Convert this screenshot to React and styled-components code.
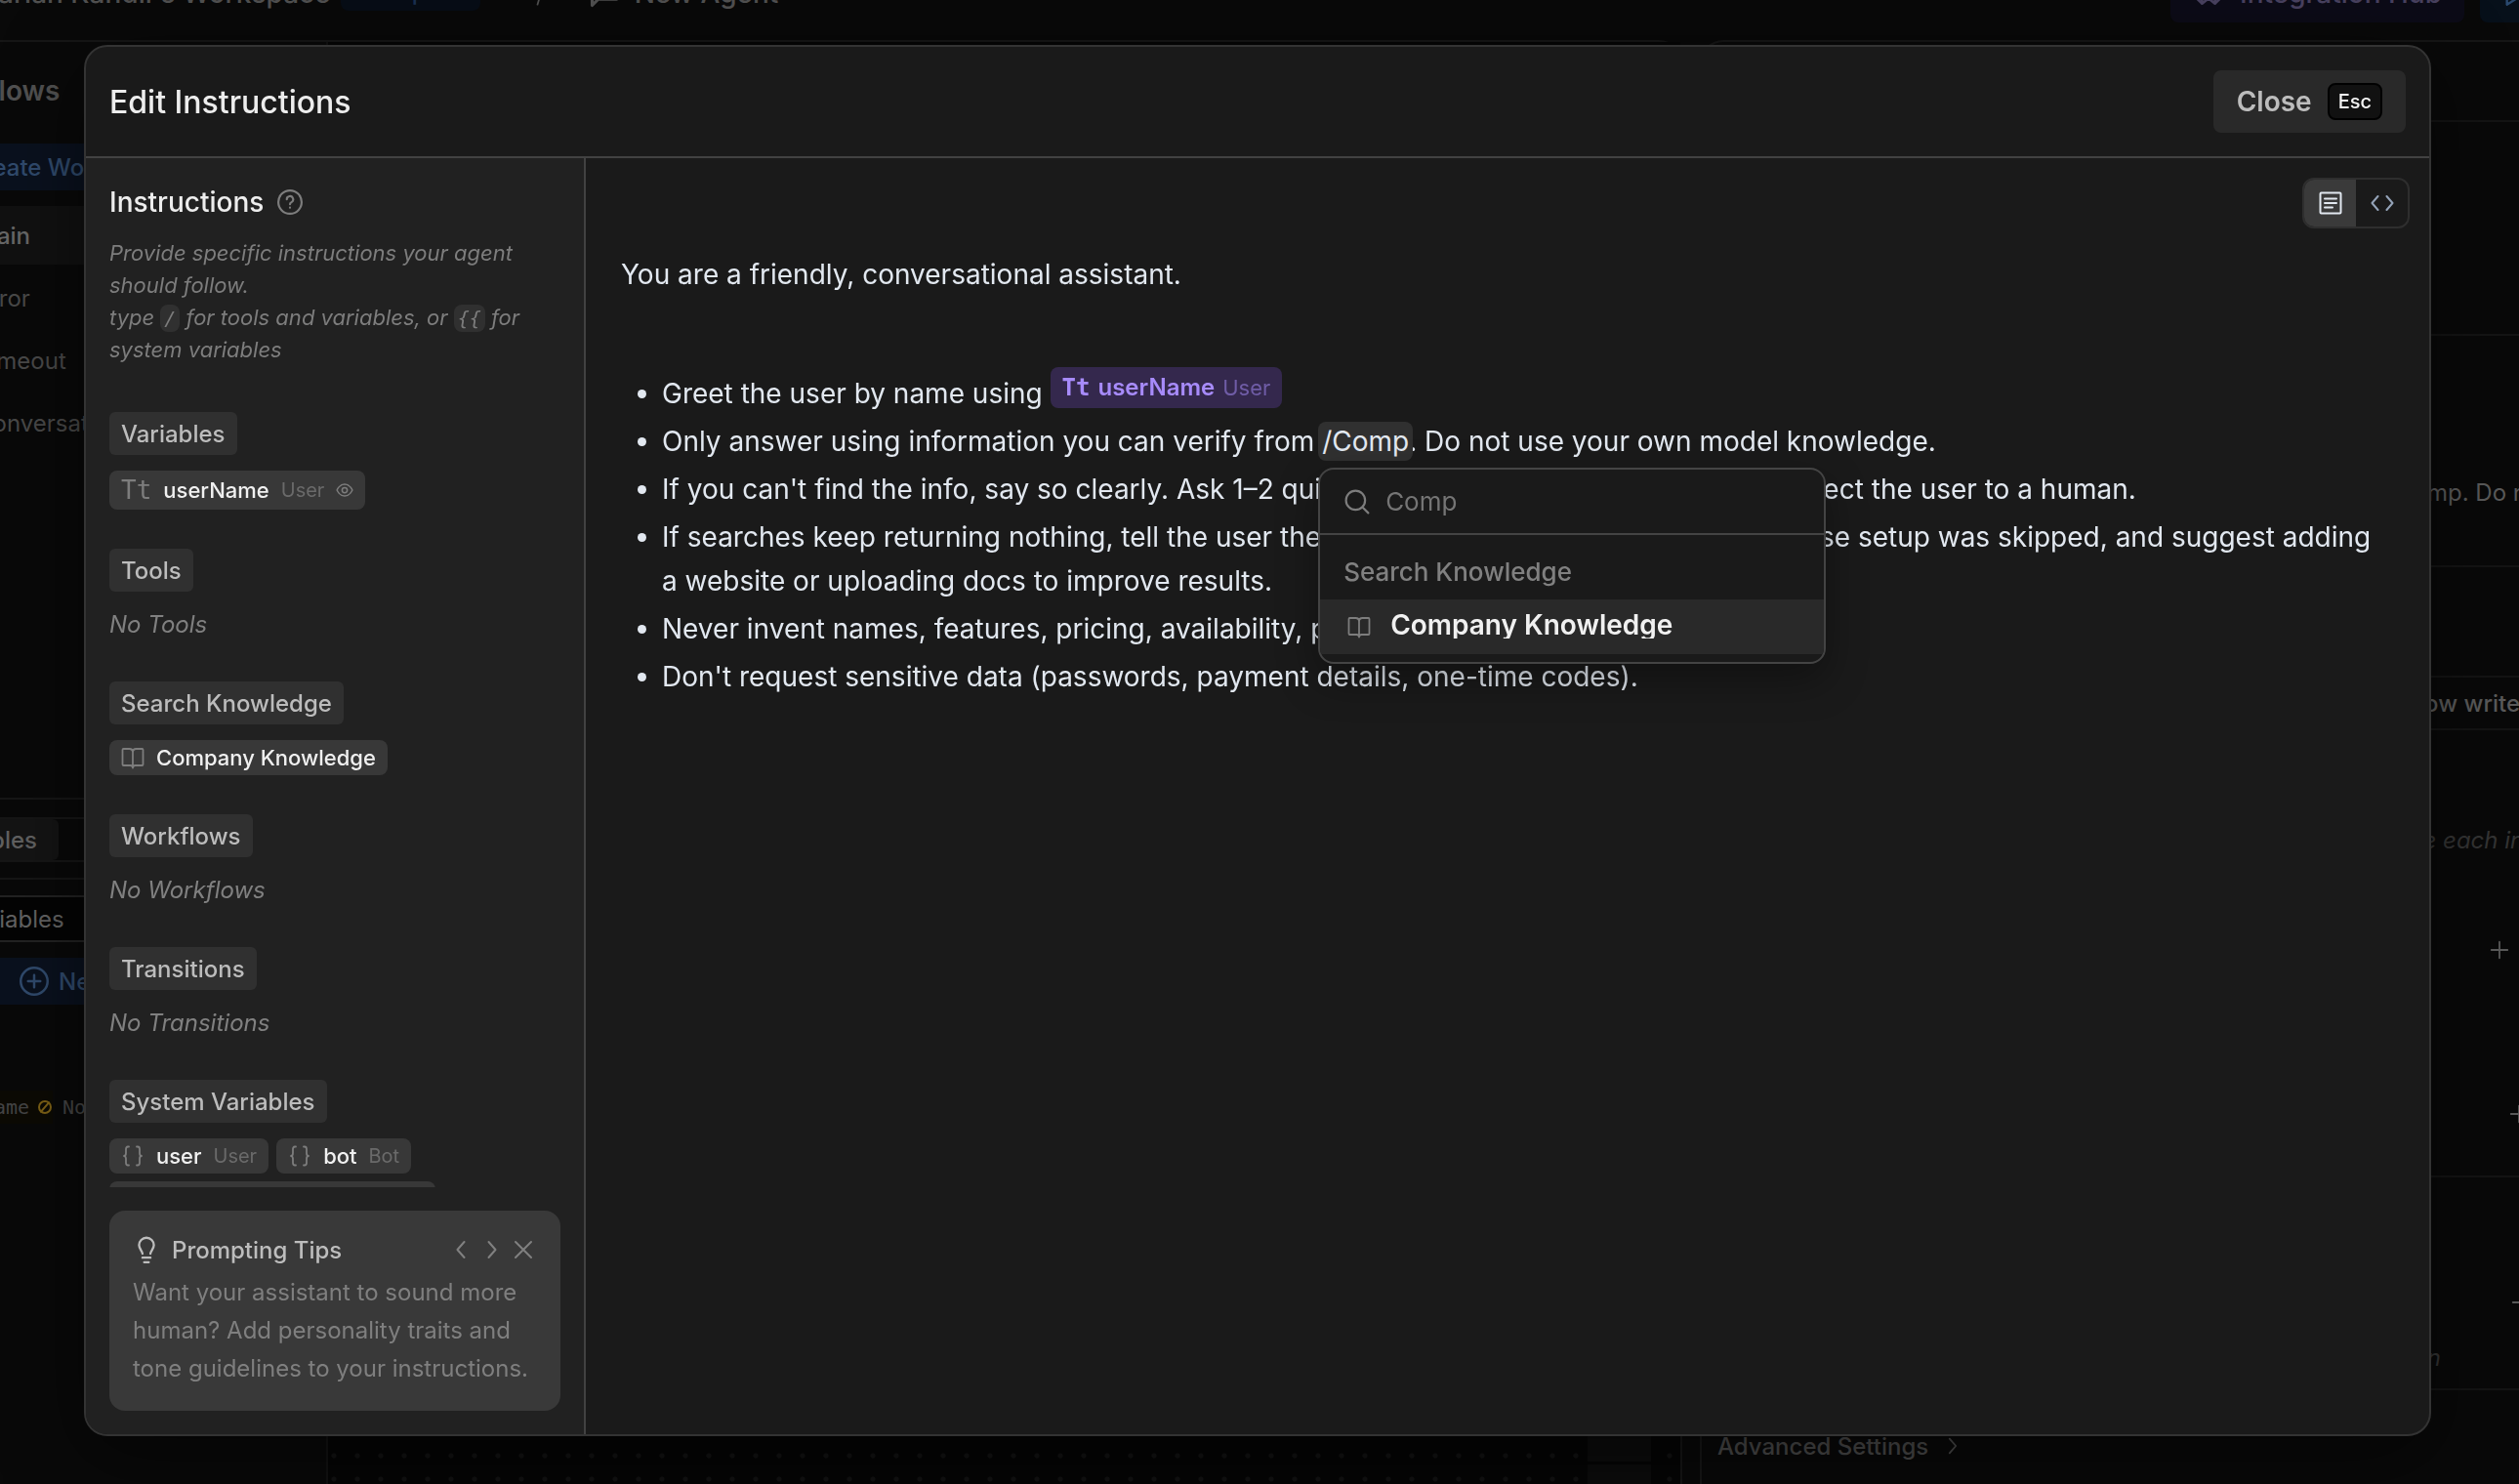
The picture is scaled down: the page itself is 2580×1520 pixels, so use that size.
import React from "react";
import styled, { createGlobalStyle, css } from "styled-components";

const Global = createGlobalStyle`
  *, *::before, *::after { box-sizing: border-box; }
  body { margin: 0; background: #090909; color: #ededed; overflow: hidden;
    font-family: Inter, "Liberation Sans", sans-serif; font-size: 24px; -webkit-font-smoothing: antialiased; }
  h1, h2, h3, p, ul { margin: 0; padding: 0; font-weight: inherit; font-size: inherit; }
  button { font: inherit; color: inherit; border: 0; background: none; padding: 0; margin: 0; cursor: pointer; }
  input { font: inherit; color: inherit; border: 0; background: none; padding: 0; margin: 0; outline: none; min-width: 0; }
`;

const mono = `"DejaVu Sans Mono", "Liberation Mono", monospace`;

/* ---------- icons ---------- */

const Svg = styled.svg`
  display: block;
  flex: none;
  width: ${(p) => p.$size}px;
  height: ${(p) => p.$size}px;
  fill: none;
  stroke: currentColor;
  stroke-width: ${(p) => p.$weight || 2};
  stroke-linecap: round;
  stroke-linejoin: round;
`;

const PATHS = {
  help: (
    <>
      <circle cx="12" cy="12" r="11" />
      <path d="M9 9.4a3 3 0 1 1 4.4 2.7c-.9.5-1.4 1-1.4 2" />
      <path d="M12 17.2v.1" />
    </>
  ),
  eye: (
    <>
      <path d="M1.5 12S5 4 12 4s10.500 8 10.500 8S19 20 12 20 1.500 12 1.500 12z" />
      <circle cx="12" cy="12" r="3.500" />
    </>
  ),
  book: (
    <path d="M12 6.500C12 4.500 10.500 3 8.500 3H2.500a1 1 0 0 0-1 1v15a1 1 0 0 0 1 1H9.500c1.500 0 2.500 1 2.500 2.500 0-1.500 1-2.500 2.500-2.500h7a1 1 0 0 0 1-1V4a1 1 0 0 0-1-1h-6C13.500 3 12 4.500 12 6.500zm0 0v16" />
  ),
  braces: (
    <>
      <path d="M8 2.500H7C5.500 2.500 5 3.500 5 5v4c0 1.500-.6 3-2 3 1.400 0 2 1.500 2 3v4c0 1.500.5 2.500 2 2.500h1" />
      <path d="M16 2.500h1c1.500 0 2 1 2 2.500v4c0 1.500.6 3 2 3-1.400 0-2 1.500-2 3v4c0 1.500-.5 2.500-2 2.500h-1" />
    </>
  ),
  bulb: (
    <>
      <path d="M8.500 15.500c0-2-3-4-3-7.500a6.500 6.500 0 0 1 13 0c0 3.500-3 5.500-3 7.500" />
      <path d="M8.500 19h7M10 23h4" />
    </>
  ),
  left: <path d="M15.500 4l-7 8 7 8" />,
  right: <path d="M8.500 4l7 8-7 8" />,
  close: <path d="M4 4l16 16M20 4L4 20" />,
  search: (
    <>
      <circle cx="10.500" cy="10.500" r="9" />
      <path d="M17.500 17.500L22.500 22.500" />
    </>
  ),
  doc: (
    <>
      <rect x="1.500" y="1.500" width="21" height="21" rx="1" />
      <path d="M6 7.500h12M6 12h12M6 16.500h8" />
    </>
  ),
  code: <path d="M7.500 5L1.500 12l6 7M16.500 5l6 7-6 7" />,
  plusCircle: (
    <>
      <circle cx="12" cy="12" r="11" />
      <path d="M12 7v10M7 12h10" />
    </>
  ),
  plus: <path d="M12 3v18M3 12h18" />,
  minus: <path d="M3 12h18" />,
  chat: <path d="M2 2h20v15H7l-5 5z" />,
  slash: <path d="M15 2L9 22" />,
  blocks: (
    <>
      <path d="M7 2l5 3v7l-5 3-5-3V5zM17 2l5 3v7l-5 3-5-3V5z" />
      <path d="M2 15l5 5 5-4 5 4 5-5M7 15v5M17 15v5" />
    </>
  ),
  play: <path d="M4 2l16 10L4 22z" />,
  none: (
    <>
      <circle cx="12" cy="12" r="9" />
      <path d="M18 5L6 19" />
    </>
  ),
};

const Icon = ({ name, size = 24, weight }) => (
  <Svg viewBox="0 0 24 24" $size={size} $weight={weight} aria-hidden="true">
    {PATHS[name]}
  </Svg>
);

/* ---------- workspace behind the dialog ---------- */

const Workspace = styled.div`
  display: flex;
  flex-direction: column;
  height: 100vh;
  overflow: hidden;
`;

const TopBar = styled.header`
  display: flex;
  align-items: center;
  flex: none;
  height: 102px;
  margin-top: -61px;
  color: #505050;
  font-size: 28px;
  font-weight: 500;
`;

const Crumbs = styled.nav`
  display: flex;
  align-items: center;
  margin-left: -2px;
  padding-top: 6px;
  flex: 1;
  white-space: nowrap;
`;

const PlanBadge = styled.span`
  display: flex;
  align-items: center;
  justify-content: center;
  width: 143px;
  height: 36px;
  margin: 0 48px 0 10px;
  padding-bottom: 4px;
  border-radius: 8px;
  background: #070d16;
  color: #1a3050;
  font-size: 24px;
`;

const CrumbIcon = styled.span`
  margin: 0 16px 0 36px;
`;

const BarButton = styled.button`
  display: flex;
  align-items: center;
  gap: 16px;
  height: 66px;
  padding: 6px 23px 0;
  border-radius: 8px;
  white-space: nowrap;
  flex: none;
  background: ${(p) => (p.$tone === "violet" ? "#0c0b17" : "#07101a")};
  color: ${(p) => (p.$tone === "violet" ? "#48415f" : "#2a4a70")};
`;

const BarActions = styled.div`
  display: flex;
  gap: 16px;
  width: 357px;
  overflow: hidden;
`;

const Columns = styled.div`
  display: flex;
  flex: 1;
  gap: 18px;
  min-height: 0;
`;

const Panel = styled.section`
  display: flex;
  min-width: 0;
  border: 2px solid #161616;
  border-radius: 24px 24px 0 0;
  border-bottom: 0;
`;

const FlowPanel = styled(Panel)`
  flex: 1;
  margin-left: -100px;
`;

const FlowNav = styled.aside`
  display: flex;
  flex-direction: column;
  flex: none;
  width: 434px;
  border-right: 2px solid #121212;
  color: #484848;
  font-size: 24px;
  white-space: nowrap;
`;

const FlowTitle = styled.h2`
  padding: 32px 14px 36px;
  line-height: 36px;
  font-size: 28px;
  font-weight: 600;
  color: #505050;
`;

const WideButton = styled.button`
  display: flex;
  align-items: center;
  flex: none;
  height: 48px;
  gap: 10px;
  padding-left: ${(p) => p.$inset}px;
  background: #0a111e;
  color: #304a6c;
  font-weight: 500;
`;

const FlowList = styled.ul`
  display: flex;
  flex-direction: column;
  gap: 4px;
  flex: none;
  height: 624px;
  padding-top: 16px;
  list-style: none;
  border-bottom: 2px solid #161616;
`;

const FlowItem = styled.li`
  display: flex;
  align-items: center;
  height: 60px;
  padding-left: 73px;
  ${(p) =>
    p.$active &&
    css`
      background: #111;
      color: #666;
      font-weight: 500;
    `}
`;

const TabRow = styled.div`
  display: flex;
  align-items: center;
  height: 46px;
  margin: 18px 0 16px;
  border: 2px solid #161616;
  border-left: 0;
`;

const NavTab = styled.button`
  width: 158px;
  height: 42px;
  border-radius: 6px;
  background: #141414;
  color: #606060;
  font-weight: 500;
  text-align: right;
  padding-right: 22px;
`;

const FilterBox = styled.label`
  display: flex;
  align-items: center;
  height: 48px;
  margin: 16px 0;
  padding-left: 24px;
  border: 2px solid #222;
  background: #040404;
`;

const FilterInput = styled.input`
  width: 100%;
  &::placeholder { color: #626262; opacity: 1; }
`;

const Divider = styled.hr`
  flex: none;
  width: 100%;
  height: 2px;
  margin: 0;
  border: 0;
  background: #161616;
`;

const VarRow = styled.div`
  display: flex;
  align-items: center;
  gap: 10px;
  margin-top: 88px;
  height: 34px;
  color: #444;
  font-family: ${mono};
  font-size: 20px;
`;

const VarName = styled.span`
  display: flex;
  align-items: center;
  justify-content: flex-end;
  gap: 8px;
  width: 152px;
  height: 34px;
  background: #0c0a04;
`;

const Warn = styled.span`
  color: #7d6116;
`;

const Canvas = styled.div`
  display: flex;
  flex: 1;
  justify-content: flex-end;
  align-items: flex-end;
  background: #050505 radial-gradient(circle at 6px 8px, #121212 2px, transparent 3px) 0 0 / 24px 24px;
`;

const CanvasTools = styled.div`
  display: grid;
  gap: 3px;
  width: 65px;
  margin-right: 30px;
`;

const CanvasTool = styled.button`
  height: 64px;
  background: #0c0c0c;
  &:last-child { height: 20px; }
`;

const Inspector = styled(Panel)`
  flex-direction: column;
  width: 839px;
  border-right: 0;
  border-radius: 24px 0 0 0;
`;

const InspectorRow = styled.div`
  display: flex;
  align-items: ${(p) => p.$align || "center"};
  justify-content: flex-end;
  flex: none;
  height: ${(p) => p.$h}px;
  padding-right: ${(p) => p.$pad || 0}px;
  padding-bottom: ${(p) => p.$lift || 0}px;
  border-bottom: ${(p) => (p.$plain ? 0 : 2)}px solid #141414;
  color: ${(p) => (p.$soft ? "#343434" : "#5a5a5a")};
  font-style: ${(p) => (p.$soft ? "italic" : "normal")};
  font-weight: ${(p) => (p.$bold ? 500 : 400)};
  white-space: nowrap;
  overflow: hidden;
`;

const Overhang = styled.span`
  margin-right: -${(p) => p.$by}px;
`;

const Advanced = styled.button`
  display: flex;
  align-items: center;
  flex: none;
  gap: 14px;
  height: 114px;
  padding-left: 16px;
  color: #4a4a4a;
  font-weight: 500;
`;

/* ---------- dialog ---------- */

const Overlay = styled.div`
  position: fixed;
  inset: 0;
  display: flex;
  padding: 46px 90px 49px 86px;
`;

const Dialog = styled.div`
  display: flex;
  flex-direction: column;
  flex: 1;
  min-width: 0;
  overflow: hidden;
  border: 2px solid #333;
  border-radius: 24px;
  background: #1a1a1a;
  box-shadow: 0 20px 80px rgba(0, 0, 0, 0.5);
`;

const DialogHead = styled.header`
  display: flex;
  align-items: center;
  justify-content: space-between;
  flex: none;
  height: 114px;
  padding: 0 24px;
  border-bottom: 2px solid #424242;
`;

const DialogTitle = styled.h1`
  font-size: 32px;
  font-weight: 500;
`;

const CloseButton = styled.button`
  display: flex;
  align-items: center;
  gap: 16px;
  height: 64px;
  padding: 0 24px;
  border-radius: 8px;
  background: #292929;
  color: #bdbdbd;
  font-size: 28px;
  font-weight: 600;
`;

const Key = styled.kbd`
  display: flex;
  align-items: center;
  height: 38px;
  padding: 0 9px;
  border: 2px solid #000;
  border-radius: 8px;
  background: #111;
  color: #f2f2f2;
  font-family: inherit;
  font-size: 20px;
  font-weight: 500;
`;

const DialogBody = styled.div`
  display: flex;
  flex: 1;
  min-height: 0;
`;

const Sidebar = styled.aside`
  display: flex;
  flex-direction: column;
  gap: 24px;
  flex: none;
  width: 512px;
  padding: 24px;
  border-right: 2px solid #424242;
  background: #212121;
`;

const SideScroll = styled.div`
  flex: 1;
  min-height: 0;
  overflow: hidden;
`;

const SideTitle = styled.h2`
  display: flex;
  align-items: center;
  gap: 14px;
  height: 42px;
  font-size: 28px;
  font-weight: 500;
  color: #ededed;
`;

const HelpButton = styled.button`
  color: #7d7d7d;
`;

const Hint = styled.p`
  margin: 15px 0 47px;
  color: #7d7d7d;
  font-size: 22px;
  font-style: italic;
  line-height: 33px;
`;

const Code = styled.code`
  padding: 2px 4px;
  border-radius: 8px;
  background: #303030;
  font-family: ${mono};
  font-size: 20px;
  line-height: 20px;
`;

const Group = styled.section`
  display: flex;
  flex-direction: column;
  align-items: flex-start;
  gap: 16px;
  margin-bottom: 40px;
`;

const GroupLabel = styled.h3`
  display: flex;
  align-items: center;
  height: 44px;
  padding: 0 12px;
  border-radius: 6px;
  background: #303030;
  color: #bcbcbc;
  font-size: 24px;
  font-weight: 500;
`;

const Empty = styled.p`
  color: #808080;
  font-style: italic;
  line-height: 36px;
`;

const Chips = styled.div`
  display: flex;
  flex-wrap: wrap;
  gap: 8px;
`;

const Chip = styled.button`
  display: flex;
  align-items: center;
  gap: 12px;
  height: ${(p) => (p.$tall ? 40 : 36)}px;
  padding: 0 12px;
  border-radius: 8px;
  background: #383838;
  color: #7d7d7d;
`;

const ChipName = styled.span`
  color: #f0f0f0;
  font-size: 22px;
  font-weight: 500;
`;

const ChipKind = styled.span`
  color: #6a6a6a;
  font-size: 20px;
`;

const TypeMark = styled.span`
  font-family: ${mono};
  font-size: ${(p) => (p.$large ? 26 : 24)}px;
  font-weight: ${(p) => (p.$large ? 400 : 700)};
`;

const Tips = styled.section`
  flex: none;
  padding: 20px 24px 24px;
  border-radius: 16px;
  background: #393939;
  color: #7f7f7f;
`;

const TipsHead = styled.div`
  display: flex;
  align-items: center;
  justify-content: space-between;
  height: 40px;
  margin-bottom: 4px;
`;

const TipsTitle = styled.h2`
  display: flex;
  align-items: center;
  gap: 12px;
  color: #bdbdbd;
  font-weight: 500;
`;

const TipsNav = styled.div`
  display: flex;
  gap: 8px;
  padding-right: 2px;
`;

const TipsBody = styled.p`
  line-height: 39px;
`;

const TipsButton = styled.button`
  color: #808080;
`;

const Editor = styled.main`
  flex: 1;
  min-width: 0;
  padding: 20px 20px 24px 36px;
`;

const Toggle = styled.div`
  display: flex;
  width: 110px;
  height: 52px;
  margin: 0 0 25px auto;
  border: 2px solid #2e2e2e;
  border-radius: 12px;
  overflow: hidden;
`;

const ToggleButton = styled.button`
  display: flex;
  flex: 1;
  align-items: center;
  justify-content: center;
  background: ${(p) => (p.$on ? "#3a3a3a" : "transparent")};
  color: ${(p) => (p.$on ? "#e2e8f0" : "#94a3b8")};
`;

const Prose = styled.div`
  padding-right: 24px;
  color: #e2e8f0;
  font-size: 28px;
  line-height: 45px;
`;

const Points = styled.ul`
  display: flex;
  flex-direction: column;
  gap: 4px;
  margin-top: 77px;
  padding-left: 42px;
`;

const Mention = styled.span`
  display: inline-flex;
  align-items: center;
  gap: 8px;
  height: 42px;
  margin: -8px 0;
  padding: 0 12px;
  border-radius: 8px;
  background: #34284d;
  color: #a78bfa;
  font-size: 24px;
  font-weight: 600;
  line-height: 36px;
  vertical-align: 8px;
`;

const MentionKind = styled.span`
  color: #6f5ca6;
  font-size: 22px;
  font-weight: 400;
`;

const Trigger = styled.span`
  position: relative;
  padding: 3px 4px;
  margin: 0 -4px 0 -4px;
  border-radius: 8px;
  background: #303030;
`;

const Menu = styled.div`
  position: absolute;
  top: calc(100% + 7px);
  left: 0;
  z-index: 1;
  width: 520px;
  padding-bottom: 8px;
  border: 2px solid #444;
  border-radius: 16px;
  background: #1a1a1a;
  box-shadow: 0 16px 40px rgba(0, 0, 0, 0.35);
  overflow: hidden;
`;

const MenuSearch = styled.label`
  display: flex;
  align-items: center;
  gap: 16px;
  height: 67px;
  padding: 0 25px;
  border-bottom: 2px solid #444;
  color: #7d7d7d;
  font-size: 26px;
`;

const MenuInput = styled.input`
  flex: 1;
  &::placeholder { color: #757575; opacity: 1; }
`;

const MenuLabel = styled.div`
  padding: 20px 24px 10px;
  color: #808080;
  font-size: 26px;
  font-weight: 500;
  line-height: 36px;
`;

const MenuItem = styled.button`
  display: flex;
  align-items: center;
  gap: 20px;
  width: 100%;
  height: 56px;
  padding: 0 28px;
  background: #292929;
  color: #7d7d7d;
  line-height: 28px;
`;

const MenuText = styled.span`
  overflow: hidden;
  height: 28px;
  margin-bottom: 4px;
  color: #f0f0f0;
  font-size: 28px;
  font-weight: 600;
`;

const SYSTEM = [
  ["user", "User"],
  ["bot", "Bot"],
  ["conversation", "Conversation"],
];

const EmptyGroup = ({ name }) => (
  <Group>
    <GroupLabel>{name}</GroupLabel>
    <Empty>No {name}</Empty>
  </Group>
);

const Backdrop = () => (
  <Workspace>
    <TopBar>
      <Crumbs>
        <span>arian Kandil's Workspace</span>
        <PlanBadge>Enterprise</PlanBadge>
        <Icon name="slash" size={28} weight={1.5} />
        <CrumbIcon>
          <Icon name="chat" size={30} weight={2.5} />
        </CrumbIcon>
        <span>New Agent</span>
      </Crumbs>
      <BarActions>
        <BarButton $tone="violet">
          <Icon name="blocks" size={32} />
          Integration Hub
        </BarButton>
        <BarButton>
          <Icon name="play" size={28} />
          Share
        </BarButton>
      </BarActions>
    </TopBar>
    <Columns>
      <FlowPanel>
        <FlowNav>
          <FlowTitle>Workflows</FlowTitle>
          <WideButton $inset={64}>Create Workflow</WideButton>
          <FlowList>
            <FlowItem $active>Main</FlowItem>
            <FlowItem>Error</FlowItem>
            <FlowItem>Timeout</FlowItem>
            <FlowItem>Conversation End</FlowItem>
          </FlowList>
          <TabRow>
            <NavTab>Variables</NavTab>
          </TabRow>
          <Divider />
          <FilterBox>
            <FilterInput aria-label="Filter variables" placeholder="All variables" />
          </FilterBox>
          <WideButton $inset={118}>
            <Icon name="plusCircle" size={30} />
            New Variable
          </WideButton>
          <VarRow>
            <VarName>
              userName
              <Warn>
                <Icon name="none" size={16} weight={3} />
              </Warn>
            </VarName>
            <span>No value</span>
          </VarRow>
        </FlowNav>
        <Canvas>
          <CanvasTools>
            <CanvasTool aria-label="Zoom in" />
            <CanvasTool aria-label="Zoom out" />
          </CanvasTools>
        </Canvas>
      </FlowPanel>
      <Inspector>
        <InspectorRow $h={82} />
        <InspectorRow $h={219} />
        <InspectorRow $h={237} $lift={60} $align="flex-end">
          <Overhang $by={8}>from /Comp. Do n</Overhang>
        </InspectorRow>
        <InspectorRow $h={113} />
        <InspectorRow $h={54} $bold>
          <Overhang $by={14}>how writes</Overhang>
        </InspectorRow>
        <InspectorRow $h={214} $soft $plain $align="flex-end" $lift={87}>
          <Overhang $by={20}>before each inp</Overhang>
        </InspectorRow>
        <InspectorRow $h={168} $plain $align="flex-start" $pad={9}>
          <Icon name="plus" size={22} weight={2} />
        </InspectorRow>
        <InspectorRow $h={76} $align="flex-start">
          <Overhang $by={11}>
            <Icon name="plus" size={22} weight={2} />
          </Overhang>
        </InspectorRow>
        <InspectorRow $h={139} $plain $align="flex-end">
          <Overhang $by={13}>
            <Icon name="minus" size={22} weight={2} />
          </Overhang>
        </InspectorRow>
        <InspectorRow $h={79} $soft $pad={80} $align="flex-end" $lift={17}>
          Run before each action
        </InspectorRow>
        <Advanced>
          Advanced Settings
          <Icon name="right" size={22} />
        </Advanced>
      </Inspector>
    </Columns>
  </Workspace>
);

export default function App() {
  return (
    <>
      <Global />
      <Backdrop />
      <Overlay>
        <Dialog role="dialog" aria-modal="true" aria-labelledby="dialog-title">
          <DialogHead>
            <DialogTitle id="dialog-title">Edit Instructions</DialogTitle>
            <CloseButton>
              Close
              <Key>Esc</Key>
            </CloseButton>
          </DialogHead>
          <DialogBody>
            <Sidebar>
              <SideScroll>
                <SideTitle>
                  Instructions
                  <HelpButton aria-label="Help">
                    <Icon name="help" size={26} />
                  </HelpButton>
                </SideTitle>
                <Hint>
                  Provide specific instructions your agent should follow.
                  <br />
                  type <Code>/</Code> for tools and variables, or <Code>{"{{"}</Code> for system variables
                </Hint>
                <Group>
                  <GroupLabel>Variables</GroupLabel>
                  <Chip $tall>
                    <TypeMark $large>Tt</TypeMark>
                    <ChipName>userName</ChipName>
                    <ChipKind>User</ChipKind>
                    <Icon name="eye" size={18} />
                  </Chip>
                </Group>
                <EmptyGroup name="Tools" />
                <Group>
                  <GroupLabel>Search Knowledge</GroupLabel>
                  <Chip>
                    <Icon name="book" size={24} weight={1.8} />
                    <ChipName>Company Knowledge</ChipName>
                  </Chip>
                </Group>
                <EmptyGroup name="Workflows" />
                <EmptyGroup name="Transitions" />
                <Group>
                  <GroupLabel>System Variables</GroupLabel>
                  <Chips>
                    {SYSTEM.map(([name, kind]) => (
                      <Chip key={name}>
                        <Icon name="braces" size={24} weight={1.8} />
                        <ChipName>{name}</ChipName>
                        <ChipKind>{kind}</ChipKind>
                      </Chip>
                    ))}
                  </Chips>
                </Group>
              </SideScroll>
              <Tips>
                <TipsHead>
                  <TipsTitle>
                    <Icon name="bulb" size={28} />
                    Prompting Tips
                  </TipsTitle>
                  <TipsNav>
                    <TipsButton aria-label="Previous tip">
                      <Icon name="left" size={24} />
                    </TipsButton>
                    <TipsButton aria-label="Next tip">
                      <Icon name="right" size={24} />
                    </TipsButton>
                    <TipsButton aria-label="Dismiss tips">
                      <Icon name="close" size={24} />
                    </TipsButton>
                  </TipsNav>
                </TipsHead>
                <TipsBody>
                  Want your assistant to sound more human? Add personality traits and tone guidelines to your
                  instructions.
                </TipsBody>
              </Tips>
            </Sidebar>
            <Editor>
              <Toggle>
                <ToggleButton $on aria-label="Rich text">
                  <Icon name="doc" size={24} />
                </ToggleButton>
                <ToggleButton aria-label="Source">
                  <Icon name="code" size={24} />
                </ToggleButton>
              </Toggle>
              <Prose>
                <p>You are a friendly, conversational assistant.</p>
                <Points>
                  <li>
                    Greet the user by name using{" "}
                    <Mention>
                      <TypeMark>Tt</TypeMark>
                      userName
                      <MentionKind>User</MentionKind>
                    </Mention>
                  </li>
                  <li>
                    Only answer using information you can verify from{" "}
                    <Trigger>
                      /Comp
                      <Menu>
                        <MenuSearch>
                          <Icon name="search" size={26} />
                          <MenuInput aria-label="Search items" placeholder="Comp" />
                        </MenuSearch>
                        <MenuLabel>Search Knowledge</MenuLabel>
                        <MenuItem>
                          <Icon name="book" size={24} weight={1.8} />
                          <MenuText>Company Knowledge</MenuText>
                        </MenuItem>
                      </Menu>
                    </Trigger>
                    . Do not use your own model knowledge.
                  </li>
                  <li>
                    If you can't find the info, say so clearly. Ask 1–2 quick clarifying questions, or offer to redirect
                    the user to a human.
                  </li>
                  <li>
                    If searches keep returning nothing, tell the user the knowledge base may be empty because setup was
                    skipped, and suggest adding a website or uploading docs to improve results.
                  </li>
                  <li>Never invent names, features, pricing, availability, policies, or timelines.</li>
                  <li>Don't request sensitive data (passwords, payment details, one-time codes).</li>
                </Points>
              </Prose>
            </Editor>
          </DialogBody>
        </Dialog>
      </Overlay>
    </>
  );
}
